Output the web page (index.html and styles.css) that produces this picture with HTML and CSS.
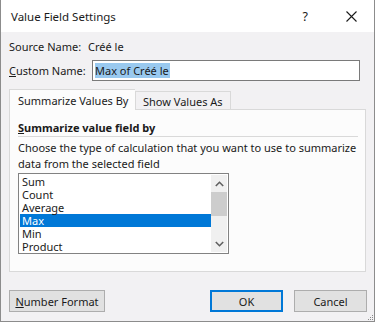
FILE: index.html
```html
<!DOCTYPE html>
<html>
<head>
<meta charset="utf-8">
<link rel="stylesheet" href="styles.css">
</head>
<body>
<div class="dialog">
  <div class="titlebar">
    <span class="title">Value Field Settings</span>
    <span class="help">?</span>
    <svg class="close" width="11" height="11" viewBox="0 0 11 11"><path d="M0.5 0.5L10.5 10.5M10.5 0.5L0.5 10.5" stroke="#1a1a1a" stroke-width="1.1" fill="none"/></svg>
  </div>
  <div class="content">
    <div class="row source">
      <span class="label">Source Name:</span>
      <span class="value">Créé le</span>
    </div>
    <div class="row custom">
      <span class="label"><u>C</u>ustom Name:</span>
      <div class="input"><span class="sel">Max of Créé le</span></div>
    </div>
    <div class="tabs">
      <div class="tab active">Summarize Values By</div>
      <div class="tab">Show Values As</div>
    </div>
    <div class="panel">
      <div class="heading"><u>S</u>ummarize value field by</div>
      <div class="desc">Choose the type of calculation that you want to use to summarize<br>data from the selected field</div>
      <div class="listbox">
        <ul class="items">
          <li>Sum</li>
          <li>Count</li>
          <li>Average</li>
          <li class="selected">Max</li>
          <li>Min</li>
          <li>Product</li>
        </ul>
        <div class="scrollbar">
          <div class="arrow"><svg width="9" height="6" viewBox="0 0 9 6"><path d="M0.8 5L4.5 1.3L8.2 5" stroke="#606060" stroke-width="1.6" fill="none"/></svg></div>
          <div class="thumb"></div>
          <div class="track"></div>
          <div class="arrow"><svg width="9" height="6" viewBox="0 0 9 6"><path d="M0.8 1L4.5 4.7L8.2 1" stroke="#606060" stroke-width="1.6" fill="none"/></svg></div>
        </div>
      </div>
    </div>
  </div>
  <div class="buttons">
    <div class="btn numfmt"><u>N</u>umber Format</div>
    <div class="spacer"></div>
    <div class="btn ok">OK</div>
    <div class="btn cancel">Cancel</div>
  </div>
  <svg class="grip" width="7" height="7" viewBox="0 0 7 7">
    <rect x="5" y="1" width="1" height="1" fill="#8a8a8a"/>
    <rect x="3" y="3" width="1" height="1" fill="#8a8a8a"/>
    <rect x="5" y="3" width="1" height="1" fill="#8a8a8a"/>
    <rect x="1" y="5" width="1" height="1" fill="#8a8a8a"/>
    <rect x="3" y="5" width="1" height="1" fill="#8a8a8a"/>
    <rect x="5" y="5" width="1" height="1" fill="#8a8a8a"/>
  </svg>
</div>
</body>
</html>
```

FILE: styles.css
```css
html, body {
  margin: 0;
  padding: 0;
  background: #ffffff;
}

body {
  font-family: "Noto Sans", "Open Sans", sans-serif;
  font-size: 11px;
  color: #1a1a1a;
}

.dialog {
  position: relative;
  width: 375px;
  height: 322px;
  box-sizing: border-box;
  background: #f2f1f3;
  border: 1px solid #8c8c8c;
  border-top: none;
  display: flex;
  flex-direction: column;
  white-space: nowrap;
}

.titlebar {
  height: 32px;
  background: #ffffff;
  display: flex;
  align-items: center;
  padding-left: 10px;
  flex: none;
}

.title {
  flex: 1;
  font-size: 11.5px;
}

.help {
  font-size: 12.5px;
  margin-right: 38px;
}

.close {
  margin-right: 17px;
}

.content {
  padding: 0 8px;
  display: flex;
  flex-direction: column;
}

.row {
  display: flex;
  align-items: center;
}

.source {
  margin-top: 6px;
  height: 16px;
}

.source .label {
  width: 79px;
}

.custom {
  margin-top: 6px;
  height: 21px;
}

.custom .label {
  width: 83px;
}

.input {
  flex: 1;
  height: 21px;
  box-sizing: border-box;
  border: 1px solid #7a7a7a;
  background: #ffffff;
  margin-right: 6px;
  display: flex;
  align-items: center;
  padding-left: 2px;
}

.sel {
  background: #99c9ef;
  line-height: 15px;
  padding-right: 1px;
}

.tabs {
  margin-top: 8px;
  height: 20px;
  display: flex;
  align-items: flex-end;
}

.tab {
  box-sizing: border-box;
  height: 18px;
  border: 1px solid #d9d9d9;
  border-bottom: none;
  padding: 0 7px;
  display: flex;
  align-items: center;
  padding-top: 2px;
  background: #f2f1f3;
}

.tab.active {
  position: relative;
  z-index: 1;
  height: 21px;
  margin-bottom: -1px;
  width: 126px;
  padding: 0 0 0 8px;
  background: #fcfcfc;
  border-right: none;
}

.tab.active + .tab {
  border-left: 1px solid #d9d9d9;
  width: 96px;
}

.panel {
  height: 163px;
  box-sizing: border-box;
  border: 1px solid #d9d9d9;
  background: #fcfcfc;
  padding: 10px 7px 0 8px;
  margin-right: 0;
}

.heading {
  font-weight: bold;
  height: 16px;
  line-height: 16px;
  border-bottom: 1px solid #d9d9d9;
}

.desc {
  margin-top: 3px;
  line-height: 16px;
}

.listbox {
  margin-top: 1px;
  width: 211px;
  box-sizing: border-box;
  border: 1px solid #828282;
  background: #ffffff;
  padding: 1px 1px 0 1px;
  display: flex;
}

.items {
  list-style: none;
  margin: 0;
  padding: 0;
  flex: 1;
}

.items li {
  height: 13px;
  line-height: 13px;
  padding-left: 2px;
}

.items li.selected {
  background: #0078d7;
  color: #ffffff;
}

.scrollbar {
  width: 16px;
  background: #f0f0f0;
  display: flex;
  flex-direction: column;
  margin-bottom: 1px;
}

.arrow {
  height: 17px;
  display: flex;
  align-items: center;
  justify-content: center;
}

.thumb {
  height: 24px;
  background: #cdcdcd;
}

.track {
  flex: 1;
}

.buttons {
  margin-top: 18px;
  padding: 0 7px 0 8px;
  display: flex;
  gap: 11px;
}

.spacer {
  flex: 1;
}

.btn {
  height: 22px;
  box-sizing: border-box;
  border: 1px solid #adadad;
  background: #e1e1e1;
  display: flex;
  align-items: center;
  justify-content: center;
}

.numfmt {
  width: 96px;
}

.ok {
  width: 73px;
  border: 2px solid #0078d7;
}

.cancel {
  width: 73px;
}

.grip {
  position: absolute;
  right: 0;
  bottom: 0;
}
```
